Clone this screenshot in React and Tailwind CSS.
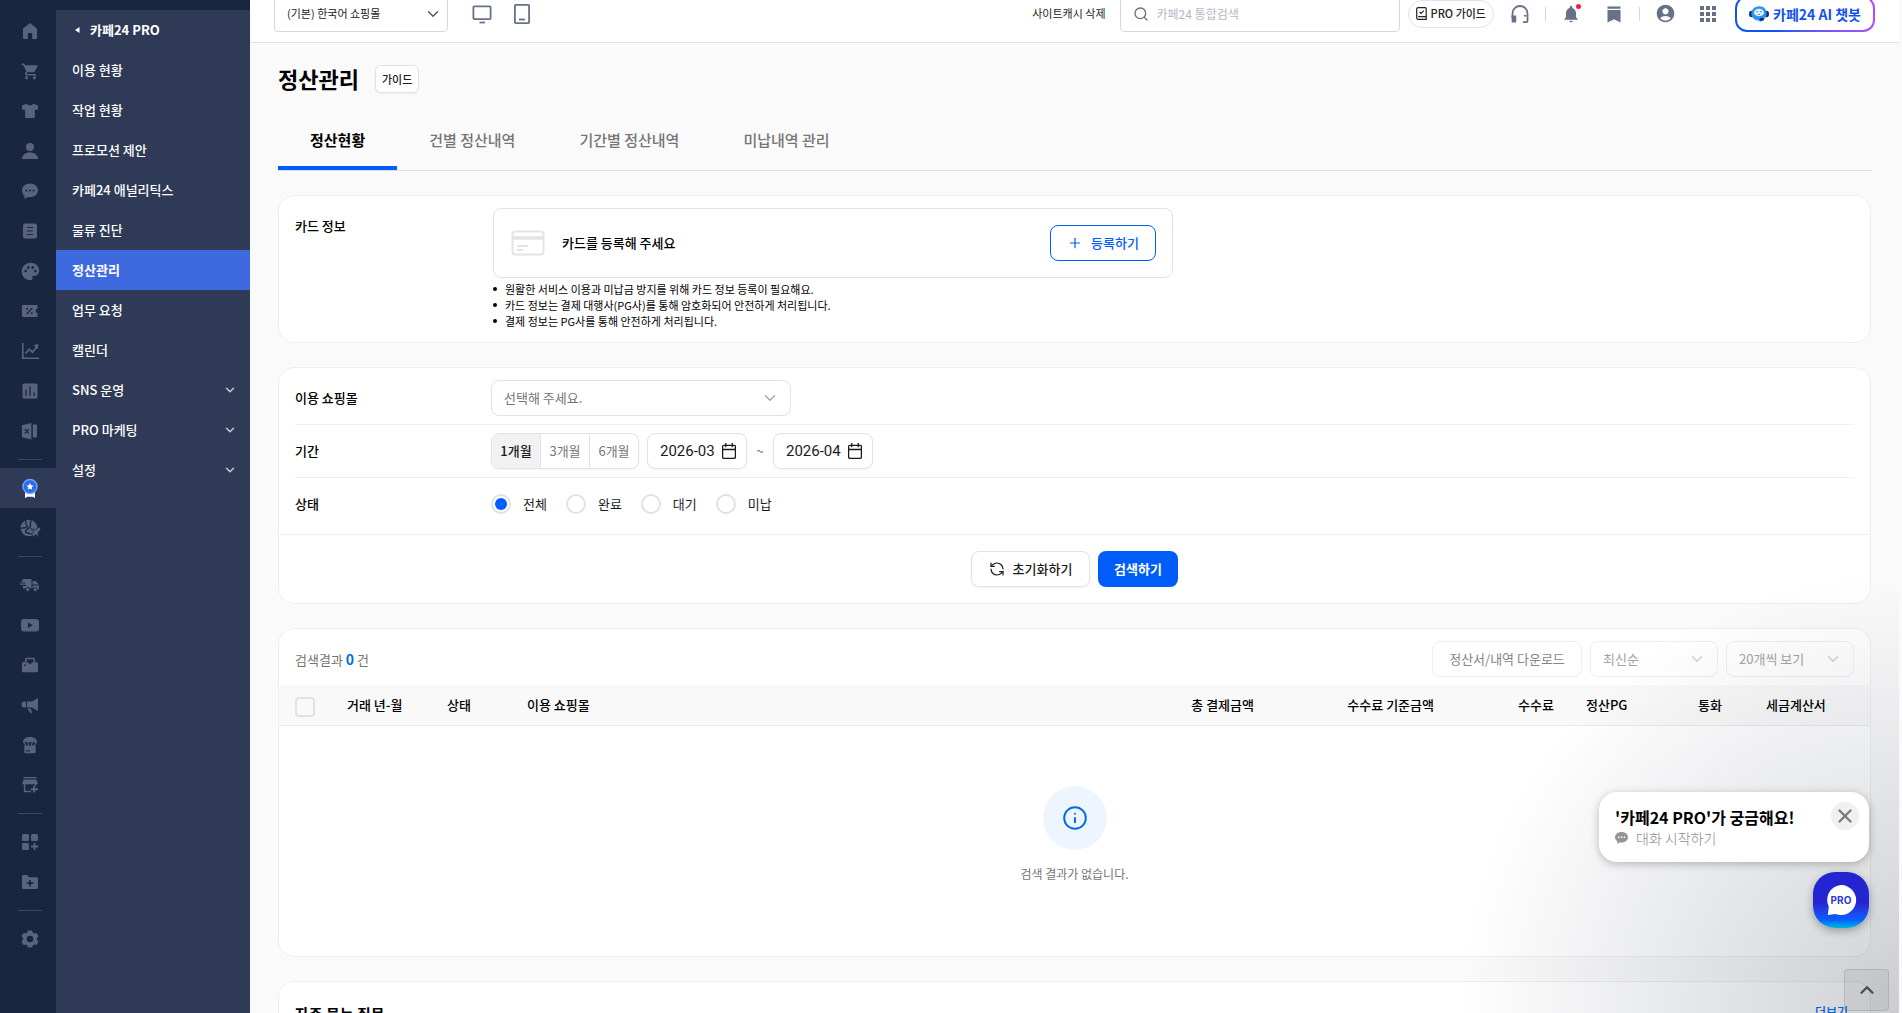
import { ChevronDown, ChevronUp, Info, Plus, RefreshCw, Search, X } from "lucide-react"
import { MdAccountCircle, MdNotifications, MdPalette, MdShoppingCart } from "react-icons/md"

const railBg = "#192640"

function Glyph({ size = 20, children }) {
  return (
    <svg width={size} height={size} viewBox="0 0 20 20" fill="currentColor" aria-hidden="true">
      {children}
    </svg>
  )
}

const railIcons = {
  home: (
    <Glyph>
      <path d="M9.4 2.4a1 1 0 0 1 1.2 0L16.4 7c.4.3.6.7.6 1.2V17a1 1 0 0 1-1 1h-3.8v-5a1 1 0 0 0-1-1H8.8a1 1 0 0 0-1 1v5H4a1 1 0 0 1-1-1V8.2C3 7.7 3.2 7.3 3.6 7z" />
    </Glyph>
  ),
  cart: <MdShoppingCart size={19} />,
  shirt: (
    <Glyph>
      <path d="M7 3h-.8L2.6 4.3a1 1 0 0 0-.6.9v2.6c0 .5.4.9.9.9h2.3V16c0 .6.4 1 1 1h7.600c.6 0 1-.4 1-1V8.700h2.300c.5 0 .9-.4.9-.9V5.200a1 1 0 0 0-.6-.9L13.800 3H13c-.5 1.800-5.500 1.800-6 0z" />
    </Glyph>
  ),
  person: (
    <Glyph>
      <circle cx="10" cy="6" r="4" />
      <path d="M2 18c0-4 3.500-6.500 8-6.500s8 2.500 8 6.500z" />
    </Glyph>
  ),
  chat: (
    <Glyph>
      <path d="M10 2.500c4.600 0 8 3 8 6.800s-3.400 6.900-8 6.900c-.8 0-1.500-.1-2.200-.3L4.500 18v-3.200C2.800 13.500 2 11.600 2 9.300c0-3.800 3.400-6.800 8-6.800z" />
      <g fill={railBg}>
        <circle cx="6.300" cy="9.400" r="1" />
        <circle cx="10" cy="9.400" r="1" />
        <circle cx="13.700" cy="9.400" r="1" />
      </g>
    </Glyph>
  ),
  document: (
    <Glyph>
      <rect x="3" y="2.500" width="14" height="15" rx="2" />
      <path d="M7 6.500h6M7 10h6M7 13.500h6" stroke={railBg} strokeWidth="1.200" />
    </Glyph>
  ),
  palette: <MdPalette size={21} />,
  coupon: (
    <Glyph>
      <path d="M3 4h14.500v3.600a2.500 2.500 0 0 0 0 4.800V16H3a1 1 0 0 1-1-1V5a1 1 0 0 1 1-1z" />
      <path d="m6.700 13 5.600-6" stroke={railBg} strokeWidth="1.100" />
      <circle cx="7.200" cy="7.700" r="1" fill={railBg} />
      <circle cx="11.800" cy="12.300" r="1" fill={railBg} />
    </Glyph>
  ),
  trend: (
    <Glyph>
      <path d="M2.800 2v15.200H19" fill="none" stroke="currentColor" strokeWidth="1.600" />
      <path d="m5.500 12.500 3.700-4.300 3.300 3L17 5.500" fill="none" stroke="currentColor" strokeWidth="1.800" />
      <path d="M13.500 4 18.500 3l-.6 5z" />
    </Glyph>
  ),
  bars: (
    <Glyph>
      <rect x="2.500" y="2.500" width="15" height="15" rx="1.500" />
      <path d="M6 8.500V15M10 5.500V15M14 11.500V15" stroke={railBg} strokeWidth="1.300" />
    </Glyph>
  ),
  excel: (
    <Glyph>
      <path d="M2 4.200 11.300 2v16.500L2 16.200z" />
      <path d="M12.800 3.500H16a1 1 0 0 1 1 1V15.500a1 1 0 0 1-1 1h-3.200z" />
      <path d="m4.800 8 4 4.600m0-4.600-4 4.600" stroke={railBg} strokeWidth="1.200" />
    </Glyph>
  ),
  award: (
    <Glyph>
      <path d="M5 12h10v8l-2.500-1.200h-5L5 20z" fill="#fff" />
      <circle cx="10" cy="8.500" r="7.800" fill="#6aa0ff" />
      <circle cx="10" cy="8.500" r="6.200" fill="#2e6be8" />
      <path d="m10 5 1.100 2.200 2.400.4-1.700 1.700.4 2.400-2.200-1.100-2.200 1.100.4-2.400-1.700-1.700 2.400-.4z" fill="#fff" />
    </Glyph>
  ),
  globe: (
    <Glyph size={22}>
      <circle cx="9" cy="10" r="7.600" />
      <g fill="none" stroke={railBg} strokeWidth="1.200">
        <path d="M5.500 2.500c2 2-.5 4 1.500 5s-1 3-6 2.500" />
        <path d="M11 1.500c.5 3-1.500 4-.5 6S5 11 6 14l4 1" />
      </g>
      <path d="m18.500 9-3.200 2.600-4.800-1 3 3-1.700 1.800-1.600-.2 2.300 1.500 1.300 2.400v-1.700l1.800-1.500 2.400 2.900-.5-4.800L20 11z" stroke={railBg} strokeWidth=".7" />
    </Glyph>
  ),
  truck: (
    <Glyph>
      <path d="M2.500 4h9v9.500H10a2.400 2.400 0 0 0-4.500 0H3V11h3V9.800H0V8.600h5V7.400H1V6.200h1.500z" />
      <path d="M12.500 6h3.300l3 3.500H12.500zM12.500 10.600H19v3.600h-1.500a2.400 2.400 0 0 0-4.500-.6h-.5z" />
      <circle cx="7.700" cy="14.600" r="1.600" />
      <circle cx="15.300" cy="14.600" r="1.600" />
    </Glyph>
  ),
  video: (
    <Glyph>
      <rect x="1" y="4" width="18" height="12.500" rx="3" />
      <path d="M8 7.500v5.500l4.800-2.700z" fill={railBg} />
    </Glyph>
  ),
  bag: (
    <Glyph>
      <path d="M5.700 7V4.500a1 1 0 0 1 1-1h6.600a1 1 0 0 1 1 1V7" fill="none" stroke="currentColor" strokeWidth="1.600" />
      <path d="M2 8a.8.8 0 0 1 .8-.8h4.700L10 9.500l2.500-2.300h4.700a.8.8 0 0 1 .8.8v8.500a.8.8 0 0 1-.8.800H2.800a.8.8 0 0 1-.8-.8z" />
      <circle cx="5" cy="10.200" r=".9" fill={railBg} />
    </Glyph>
  ),
  megaphone: (
    <Glyph>
      <path d="M7 6.500h5l6-3.500v13l-6-3.500H7zM6 6.500v6H4.500a3 3 0 0 1 0-6zM7.500 13.500h2.800l2 4-1.600 1z" />
    </Glyph>
  ),
  parachute: (
    <Glyph>
      <path d="M3 7c0-3 3.100-5 7-5s7 2 7 5l-1.200.7-1.600-1-1.400 1-1.400-1L10 7.700l-1.400-1-1.400 1-1.400-1-1.600 1z" />
      <path d="m3.500 7 2.700 4m10.300-4-2.700 4M8 7.500l.7 3m3.300-3-.7 3" stroke="currentColor" strokeWidth="1.100" />
      <rect x="4.300" y="10.500" width="11.400" height="7.700" rx=".8" />
      <path d="M6 15.800h4" stroke={railBg} strokeWidth="1.100" />
    </Glyph>
  ),
  store: (
    <Glyph>
      <path d="M3.500 2h13v1.200h-13zM3.700 4.500h12.600L18 9.300H2z" />
      <path d="M4.600 9v7.500H11M15.400 9v2" fill="none" stroke="currentColor" strokeWidth="1.500" />
      <path d="M14.200 11v6.500M11 14.200h7" stroke="currentColor" strokeWidth="2" />
    </Glyph>
  ),
  apps: (
    <Glyph>
      <rect x="2" y="2" width="7" height="7" rx="1.500" />
      <rect x="11" y="2" width="7" height="7" rx="1.500" />
      <rect x="2" y="11" width="7" height="7" rx="1.500" />
      <path d="M14.500 11v7M11 14.500h7" stroke="currentColor" strokeWidth="1.900" />
    </Glyph>
  ),
  folder: (
    <Glyph>
      <path d="M2 4.200c0-.7.500-1.200 1.200-1.200H7l2 2.200h7.800c.7 0 1.200.5 1.200 1.200v9.400c0 .7-.5 1.200-1.200 1.200H3.200c-.7 0-1.200-.5-1.200-1.200z" />
      <path d="M10 8v6.400M6.800 11.200h6.400" stroke={railBg} strokeWidth="1.700" />
    </Glyph>
  ),
  gear: (
    <Glyph>
      <path d="m7.700 2 .6-.5h3.400l.6.5.5 1.800 1.300.7 1.900-.5.700.3 1.600 2.700-.1.800L17 9v2l1.200 1.200.1.800-1.600 2.700-.7.300-1.900-.5-1.300.7-.5 1.800-.6.500H8.300l-.6-.5-.5-1.800-1.300-.7-1.900.5-.7-.3L1.700 13l.1-.8L3 11V9L1.800 7.800 1.700 7l1.600-2.700.7-.3 1.900.5 1.300-.7z" />
      <circle cx="10" cy="10" r="3.300" fill={railBg} />
    </Glyph>
  ),
}

const railGroups = [
  [
    ["home", "홈"],
    ["cart", "주문"],
    ["shirt", "상품"],
    ["person", "고객"],
    ["chat", "메시지"],
    ["document", "게시판"],
    ["palette", "디자인"],
    ["coupon", "프로모션"],
    ["trend", "애널리틱스"],
    ["bars", "통계"],
    ["excel", "통합엑셀"],
  ],
  [
    ["award", "카페24 PRO"],
    ["globe", "해외"],
  ],
  [
    ["truck", "배송"],
    ["video", "유튜브"],
    ["bag", "비즈니스"],
    ["megaphone", "광고"],
    ["parachute", "공급"],
    ["store", "마켓"],
  ],
  [
    ["apps", "앱"],
    ["folder", "즐겨찾기"],
  ],
  [["gear", "설정"]],
]

const menuItems = [
  { label: "이용 현황" },
  { label: "작업 현황" },
  { label: "프로모션 제안" },
  { label: "카페24 애널리틱스" },
  { label: "물류 진단" },
  { label: "정산관리", active: true },
  { label: "업무 요청" },
  { label: "캘린더" },
  { label: "SNS 운영", expandable: true },
  { label: "PRO 마케팅", expandable: true },
  { label: "설정", expandable: true },
]

const tabs = ["정산현황", "건별 정산내역", "기간별 정산내역", "미납내역 관리"]

const cardNotes = [
  "원활한 서비스 이용과 미납금 방지를 위해 카드 정보 등록이 필요해요.",
  "카드 정보는 결제 대행사(PG사)를 통해 암호화되어 안전하게 처리됩니다.",
  "결제 정보는 PG사를 통해 안전하게 처리됩니다.",
]

const columns = [
  { label: "거래 년-월", className: "w-[100px] text-left" },
  { label: "상태", className: "w-20 text-left" },
  { label: "이용 쇼핑몰", className: "text-left" },
  { label: "총 결제금액", className: "w-[180px] text-right" },
  { label: "수수료 기준금액", className: "w-[180px] text-right" },
  { label: "수수료", className: "w-[120px] text-right" },
  { label: "정산PG", className: "w-[100px] text-left" },
  { label: "통화", className: "w-20 text-center" },
  { label: "세금계산서", className: "w-[120px] text-left" },
]

function Rail() {
  return (
    <nav aria-label="주 메뉴" className="w-14 shrink-0 bg-[#192640] pt-[11px] text-[#59647c]">
      {railGroups.map((group, index) => (
        <div key={index}>
          {index > 0 && <hr className="my-2 ml-[18px] h-px w-6 border-0 bg-[#3c475f]" />}
          {group.map(([name, label]) => (
            <a
              key={name}
              href="#"
              aria-label={label}
              className={`flex h-10 items-center justify-center pl-1 ${name === "award" ? "bg-[#2e3a56]" : ""}`}
            >
              {railIcons[name]}
            </a>
          ))}
        </div>
      ))}
    </nav>
  )
}

function SideMenu() {
  return (
    <nav aria-label="카페24 PRO 메뉴" className="w-[194px] shrink-0 bg-[#192640] pt-[10px]">
      <div className="h-full bg-[#2e3a56] text-[13px] font-medium text-white">
        <a href="#" className="flex h-10 items-center gap-[10px] pl-[18px] font-bold">
          <svg width="6" height="6" viewBox="0 0 6 6" aria-hidden="true">
            <path d="M5.500 0 1 3l4.500 3z" fill="#fff" />
          </svg>
          카페24 PRO
        </a>
        <ul>
          {menuItems.map((item) => (
            <li key={item.label}>
              <a
                href="#"
                className={`flex h-10 items-center justify-between pl-4 pr-[13px] ${item.active ? "bg-[#3f69df] font-bold" : ""}`}
              >
                {item.label}
                {item.expandable && <ChevronDown size={14} strokeWidth={2.500} className="text-[#c5cad5]" />}
              </a>
            </li>
          ))}
        </ul>
      </div>
    </nav>
  )
}

function SelectBox({ id, label, value, className, iconClassName }) {
  return (
    <div className="relative">
      <select id={id} aria-label={label} className={`h-9 appearance-none border bg-white ${className}`}>
        <option>{value}</option>
      </select>
      <ChevronDown
        size={18}
        strokeWidth={1.800}
        className={`pointer-events-none absolute top-[9px] ${iconClassName}`}
      />
    </div>
  )
}

function ChatbotFace() {
  return (
    <svg width="20" height="16" viewBox="0 0 20 16" aria-hidden="true">
      <ellipse cx="2.500" cy="8" rx="2.500" ry="3.200" fill="#14305f" />
      <ellipse cx="17.500" cy="8" rx="2.500" ry="3.200" fill="#14305f" />
      <path d="M10 .3c4.700-.3 7.600 3 7.600 7.200 0 3-1.700 5-3.300 6.400L12 15.800l-3-1.300c-4-.6-6.600-3.300-6.600-7C2.400 3.500 5.400.5 10 .3z" fill="#2b93f6" />
      <ellipse cx="10" cy="6.500" rx="5" ry="3.700" fill="#e9f6ff" />
      <path d="M7.300 6.200c.3-.8 1.200-.8 1.500 0M11.200 6.200c.3-.8 1.200-.8 1.500 0M8.800 8c.7.700 1.700.7 2.400 0" fill="none" stroke="#164a86" strokeWidth=".9" />
      <ellipse cx="12.800" cy="13.200" rx="2.200" ry="1.500" fill="#14305f" />
    </svg>
  )
}

function Header() {
  return (
    <header className="-mt-[15px] flex h-[58px] shrink-0 items-center justify-between border-b border-[#e2e2e4] bg-white pl-6 pr-6 text-[11px] text-[#222]">
      <div className="flex items-center">
        <SelectBox
          id="mall"
          label="쇼핑몰"
          value="(기본) 한국어 쇼핑몰"
          className="w-[174px] rounded-sm border-[#d3d7e0] pl-3"
          iconClassName="right-[6px] text-[#4c5366]"
        />
        <button type="button" aria-label="PC 화면" className="ml-6 text-[#667086]">
          <svg width="20" height="20" viewBox="0 0 20 20" fill="none" stroke="currentColor" strokeWidth="1.800" aria-hidden="true">
            <rect x="1.400" y="2.400" width="17.200" height="12.700" rx=".8" />
            <path d="M7.500 18.500h5.500" />
          </svg>
        </button>
        <button type="button" aria-label="모바일 화면" className="ml-5 text-[#667086]">
          <svg width="20" height="20" viewBox="0 0 20 20" fill="none" stroke="currentColor" strokeWidth="1.800" aria-hidden="true">
            <rect x="2.900" y=".9" width="14.200" height="18.200" rx=".8" />
            <path d="M7 15.500h6" />
          </svg>
        </button>
      </div>

      <div className="flex items-center">
        <a href="#">사이트캐시 삭제</a>
        <div className="ml-[14px] flex h-9 w-[280px] items-center gap-2 rounded-sm border border-[#d3d7e0] px-3">
          <Search size={16} strokeWidth={2} className="text-[#667086]" />
          <input
            type="search"
            aria-label="통합검색"
            placeholder="카페24 통합검색"
            className="min-w-0 flex-1 text-xs outline-none placeholder:text-[#b3b9c6]"
          />
        </div>
        <a href="#" className="ml-2 flex h-7 items-center gap-1 rounded-full border border-[#e3e4ea] px-[7px] font-medium">
          <svg width="11" height="13" viewBox="0 0 11 13" fill="none" stroke="#222" strokeWidth="1.200" aria-hidden="true">
            <path d="M10.200 10V1.500a.9.900 0 0 0-.9-.9H2.200a1.500 1.500 0 0 0-1.500 1.500v8.600c0 .9.600 1.600 1.500 1.600h8V9.700H2.200" />
            <path d="m3.600 5 1.500 1.500 2.700-2.800" />
          </svg>
          PRO 가이드
        </a>
        <div className="ml-4 flex items-center gap-[15px] text-[#667086]">
          <button type="button" aria-label="고객센터">
            <svg width="20" height="20" viewBox="0 0 20 20" aria-hidden="true">
              <path d="M2.500 14V9.500a7.500 7.500 0 0 1 15 0V17c0 .8-.4 1.200-1.200 1.200H13" fill="none" stroke="currentColor" strokeWidth="1.800" />
              <path d="M1.600 11.500h4.600v7H2.600a1 1 0 0 1-1-1z" fill="currentColor" />
              <path d="M14 11.800h2.500" stroke="currentColor" strokeWidth="1.500" />
            </svg>
          </button>
          <span className="h-[14px] w-px bg-[#d3d7e0]" />
          <button type="button" aria-label="알림" className="relative">
            <MdNotifications size={20} />
            <span className="absolute right-0 top-0 size-[5px] rounded-full bg-[#ff1744]" />
          </button>
          <button type="button" aria-label="북마크" className="ml-2">
            <svg width="20" height="20" viewBox="0 0 20 20" fill="currentColor" aria-hidden="true">
              <path d="M3.500 2.500h13v2.200h-13zM3.500 6h13v12.500L10 15.300l-6.500 3.200z" />
            </svg>
          </button>
          <span className="h-[14px] w-px bg-[#d3d7e0]" />
          <button type="button" aria-label="내 계정">
            <MdAccountCircle size={21} />
          </button>
          <button type="button" aria-label="전체 서비스" className="ml-2">
            <svg width="18" height="18" viewBox="0 0 18 18" fill="currentColor" aria-hidden="true">
              <path d="M1 1h4v4H1zM7 1h4v4H7zM13 1h4v4h-4zM1 7h4v4H1zM7 7h4v4H7zM13 7h4v4h-4zM1 13h4v4H1zM7 13h4v4H7zM13 13h4v4h-4z" />
            </svg>
          </button>
        </div>
        <a href="#" className="ml-[18px] rounded-xl bg-linear-to-r from-[#0f55f5] from-30% to-[#b14cf5] p-[2px]">
          <span className="flex h-8 w-[136px] items-center justify-center gap-1 rounded-[10px] bg-white text-sm font-bold text-[#1450f0]">
            <ChatbotFace />
            카페24 AI 챗봇
          </span>
        </a>
      </div>
    </header>
  )
}

function Card({ className = "", children }) {
  return (
    <section className={`mt-6 rounded-2xl border border-[#efeff0] bg-white ${className}`}>{children}</section>
  )
}

function CardInfo() {
  return (
    <Card className="flex px-4 py-3">
      <h2 className="w-[198px] shrink-0 pt-2 text-[13px] font-medium leading-5">카드 정보</h2>
      <div>
        <div className="flex h-[70px] w-[680px] max-w-full items-center rounded-lg border border-[#e2e2e3] pl-[17px] pr-4">
          <svg width="34" height="26" viewBox="0 0 34 26" fill="none" stroke="#e3e3e4" strokeWidth="2" aria-hidden="true">
            <rect x="1.500" y="1.500" width="31" height="23" rx="2.500" />
            <path d="M1.500 8h31" strokeWidth="3.500" />
            <path d="M6 16h11M6 20h6" />
          </svg>
          <p className="ml-[17px] flex-1 text-[13px] font-medium">카드를 등록해 주세요</p>
          <button
            type="button"
            className="flex h-9 w-[106px] items-center justify-center gap-2 rounded-lg border border-[#005df9] text-[13px] font-medium text-[#005df9]"
          >
            <Plus size={16} strokeWidth={1.800} />
            등록하기
          </button>
        </div>
        <ul className="mt-[3px] pb-px text-[11px] leading-4">
          {cardNotes.map((note) => (
            <li key={note} className="flex items-center gap-2">
              <span className="size-1 rounded-full bg-black" />
              {note}
            </li>
          ))}
        </ul>
      </div>
    </Card>
  )
}

function DateField({ label, value }) {
  return (
    <div className="flex h-9 w-[100px] items-center rounded-lg border border-[#e2e2e3] pl-3 pr-[10px] shadow-xs">
      <input
        type="text"
        aria-label={label}
        defaultValue={value}
        className="w-0 min-w-0 flex-1 font-[Roboto,sans-serif] text-[15px] text-[#1b1b1e] outline-none"
      />
      <svg width="14" height="16" viewBox="0 0 14 16" fill="none" stroke="#1b1b1e" strokeWidth="1.300" aria-hidden="true">
        <rect x=".6" y="2.300" width="12.800" height="13" rx="1.200" />
        <path d="M.6 6.500h12.800M3.800 0v4.200M10.200 0v4.200" />
      </svg>
    </div>
  )
}

function SearchForm() {
  return (
    <Card>
      <form>
        <div className="px-4 pt-1 text-[13px]">
          <div className="flex items-center border-b border-[#f0f0f0] py-2">
            <label htmlFor="used-mall" className="w-[196px] font-medium">
              이용 쇼핑몰
            </label>
            <SelectBox
              id="used-mall"
              value="선택해 주세요."
              className="w-[300px] rounded-lg border-[#e2e2e3] pl-3 text-[#757575]"
              iconClassName="right-3 text-[#a5a5a8]"
            />
          </div>
          <div className="flex items-center border-b border-[#f0f0f0] py-2">
            <span className="w-[196px] font-medium">기간</span>
            <div className="flex h-9 w-[148px] divide-x divide-[#e2e2e3] overflow-hidden rounded-lg border border-[#e2e2e3] shadow-xs">
              <button type="button" className="flex-1 bg-[#f2f2f2] font-medium text-[#1b1b1e]">
                1개월
              </button>
              <button type="button" className="flex-1 text-[#757575]">
                3개월
              </button>
              <button type="button" className="flex-1 text-[#757575]">
                6개월
              </button>
            </div>
            <div className="ml-2 flex items-center">
              <DateField label="시작 월" value="2026-03" />
              <span className="w-[26px] text-center text-[#757575]">~</span>
              <DateField label="종료 월" value="2026-04" />
            </div>
          </div>
          <div className="flex h-14 items-center pb-1">
            <span className="w-[196px] font-medium">상태</span>
            <div className="flex gap-[19px]">
              {["전체", "완료", "대기", "미납"].map((status, index) => (
                <label key={status} className="flex items-center gap-3 text-[#1b1b1e]">
                  <input
                    type="radio"
                    name="status"
                    defaultChecked={index === 0}
                    className="size-5 appearance-none rounded-full border-2 border-[#e2e2e3] bg-white bg-clip-content p-[2px] checked:bg-[#005df9]"
                  />
                  {status}
                </label>
              ))}
            </div>
          </div>
        </div>
        <div className="flex justify-center gap-2 border-t border-[#f0f0f0] py-4 text-[13px]">
          <button
            type="reset"
            className="flex h-9 w-[119px] items-center justify-center gap-2 rounded-lg border border-[#e2e2e3] font-medium text-[#1b1b1e] shadow-xs"
          >
            <RefreshCw size={16} strokeWidth={1.800} className="-scale-x-100" />
            초기화하기
          </button>
          <button type="submit" className="h-9 w-20 rounded-lg bg-[#005df9] font-bold text-white">
            검색하기
          </button>
        </div>
      </form>
    </Card>
  )
}

function Results() {
  return (
    <Card>
      <div className="flex items-center justify-between px-4 pb-2 pt-3 text-[13px] text-[#757575]">
        <p>
          검색결과 <strong className="text-sm text-[#006ce8]">0</strong> 건
        </p>
        <div className="flex gap-2">
          <button type="button" className="h-9 w-[150px] rounded-lg border border-[#efeff0] text-[#858587]">
            정산서/내역 다운로드
          </button>
          <SelectBox
            id="sort"
            label="정렬"
            value="최신순"
            className="w-32 rounded-lg border-[#efeff0] pl-3 text-[#a3a3a5]"
            iconClassName="right-3 text-[#cfcfd1]"
          />
          <SelectBox
            id="page-size"
            label="보기 개수"
            value="20개씩 보기"
            className="w-32 rounded-lg border-[#efeff0] pl-3 text-[#a3a3a5]"
            iconClassName="right-3 text-[#cfcfd1]"
          />
        </div>
      </div>
      <table className="w-full table-fixed text-[13px]">
        <thead>
          <tr className="h-10 border-b border-[#ebebeb] bg-[#f9f9f9]">
            <th className="w-[52px] pl-4 pt-1 text-left">
              <input
                type="checkbox"
                aria-label="전체 선택"
                className="block size-5 appearance-none rounded-sm border-2 border-[#e2e2e3]"
              />
            </th>
            {columns.map((column) => (
              <th key={column.label} className={`px-4 font-medium ${column.className}`}>
                {column.label}
              </th>
            ))}
          </tr>
        </thead>
        <tbody>
          <tr>
            <td colSpan={columns.length + 1} className="h-[231px] pt-[60px] text-center align-top text-xs text-[#757575]">
              <span className="mx-auto flex size-16 items-center justify-center rounded-full bg-[#eff5ff]">
                <Info size={26} strokeWidth={1.800} className="text-[#006ce8]" />
              </span>
              <p className="mt-4">검색 결과가 없습니다.</p>
            </td>
          </tr>
        </tbody>
      </table>
    </Card>
  )
}

function ChatLauncher() {
  return (
    <aside className="pointer-events-none absolute bottom-0 right-[3px] flex size-[440px] flex-col items-end justify-end bg-[radial-gradient(circle_440px_at_bottom_right,rgba(29,39,54,0.21)_0,rgba(29,39,54,0)_100%)] pb-[85px] pr-[30px]">
      <div className="pointer-events-auto flex h-[70px] w-[270px] justify-between rounded-[18px] bg-white pl-4 pr-[10px] pt-[10px] shadow-[0_2px_8px_rgba(0,0,0,0.25)]">
        <div className="pt-1">
          <p className="text-base font-bold leading-[22px] text-black">'카페24 PRO'가 궁금해요!</p>
          <p className="flex items-center gap-2 text-sm font-light leading-5 text-[#8b8b8b]">
            <svg width="13" height="12" viewBox="0 0 13 12" fill="#949494" aria-hidden="true">
              <path d="M6.500 0C10.100 0 13 2.200 13 5.300s-2.900 5.300-6.500 5.300c-.6 0-1.100 0-1.600-.2L2 11.800l.4-2.500C.9 8.400 0 7 0 5.300 0 2.200 2.900 0 6.500 0z" />
              <path d="M3 5.300h1.500M5.800 5.300h1.500M8.600 5.300h1.500" stroke="#fff" strokeWidth="1.500" />
            </svg>
            대화 시작하기
          </p>
        </div>
        <button
          type="button"
          aria-label="닫기"
          className="flex size-7 items-center justify-center rounded-full bg-[#f0f0f0] text-[#7a7a7a]"
        >
          <X size={22} strokeWidth={2.500} />
        </button>
      </div>
      <button
        type="button"
        className="pointer-events-auto relative mt-[10px] flex size-14 items-center justify-center rounded-[22px] bg-linear-to-b from-[#2424d0] from-55% via-[#0c5cff] via-85% to-[#08b4dd] shadow-[0_3px_8px_rgba(0,0,0,0.3)]"
      >
        <svg width="32" height="32" viewBox="0 0 32 32" aria-hidden="true">
          <path d="M16 1a15 15 0 1 1-5.500 28.900L2.800 31l1-8.300A15 15 0 0 1 16 1z" fill="#fff" />
        </svg>
        <span className="absolute font-[Inter,sans-serif] text-[10px] font-bold leading-none text-[#2a3bd0]">PRO</span>
      </button>
    </aside>
  )
}

export default function App() {
  return (
    <div className="relative flex h-screen overflow-hidden bg-[#fafafa] font-['Noto_Sans_CJK_KR',sans-serif] text-black">
      <Rail />
      <SideMenu />
      <div className="mr-[3px] flex min-w-0 flex-1 flex-col">
        <Header />
        <main className="px-7 pt-[22px]">
          <div className="flex h-7 items-start gap-4">
            <h1 className="text-[22px] font-bold leading-[26px]">정산관리</h1>
            <button
              type="button"
              className="h-7 rounded-md border border-[#e2e2e3] bg-white px-[6px] text-[11px] font-medium text-[#1b1b1e] shadow-xs"
            >
              가이드
            </button>
          </div>
          <div role="tablist" className="mt-[21px] flex border-b border-[#e0e0e1] text-[15px] font-medium">
            {tabs.map((tab, index) => (
              <button
                key={tab}
                type="button"
                role="tab"
                aria-selected={index === 0}
                className={`h-14 border-b-4 px-8 ${
                  index === 0 ? "border-[#005df9] font-bold text-black" : "border-transparent text-[#757575]"
                }`}
              >
                {tab}
              </button>
            ))}
          </div>
          <CardInfo />
          <SearchForm />
          <Results />
          <Card className="flex h-40 items-start justify-between px-4 pt-5">
            <h2 className="text-[15px] font-bold leading-6">자주 묻는 질문</h2>
            <a href="#" className="mr-[6px] text-xs font-medium leading-5 text-[#006ce8]">
              더보기
            </a>
          </Card>
        </main>
      </div>
      <ChatLauncher />
      <button
        type="button"
        aria-label="맨 위로"
        className="absolute bottom-[2px] right-[13px] flex h-[42px] w-[45px] items-center justify-center rounded-sm border border-black/10 bg-black/5 text-[#4a4a4a]"
      >
        <ChevronUp size={22} strokeWidth={2.500} />
      </button>
    </div>
  )
}
